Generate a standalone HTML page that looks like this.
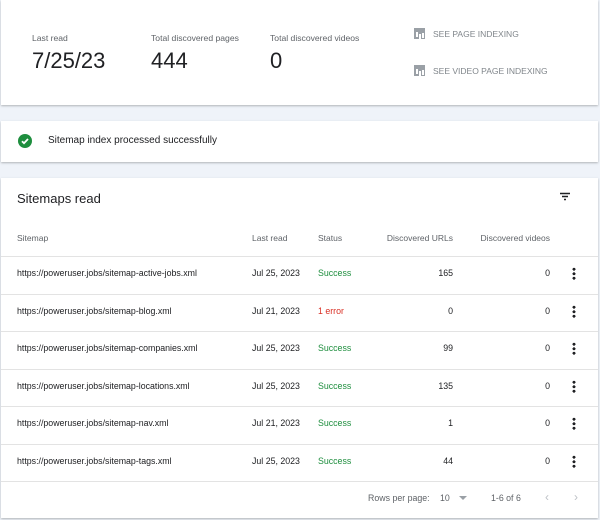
<!DOCTYPE html>
<html><head><style>
*{margin:0;padding:0;box-sizing:border-box}
body{width:600px;height:520px;background:#eff3f9;font-family:"Liberation Sans",sans-serif;color:#202124;position:relative;overflow:hidden}
.card{position:absolute;left:1px;width:597px;background:#fff;box-shadow:0 1px 2px rgba(60,64,67,.35)}
.lbl{position:absolute;font-size:8.6px;color:#5f6368}
.big{position:absolute;font-size:22px;color:#202124}
.lnk{position:absolute;font-size:8.5px;color:#80868b;display:flex;align-items:center}
.lnk i{display:inline-block;width:11px;height:11px;background:#9aa0a6;margin-right:8px;position:relative}
.lnk i:before{content:"";position:absolute;left:2px;bottom:2px;width:1.5px;height:5px;background:#fff;box-shadow:3px 2px 0 #fff,6px 1px 0 #fff}
.row{position:absolute;left:0;width:597px;height:37.5px;border-top:1px solid #e3e3e3;font-size:8.8px}
.row span{position:absolute;top:11px}
.ok{color:#1e8e3e}.err{color:#d93025}
.dots{position:absolute;left:571px;top:10px;width:4px;height:13px;background:radial-gradient(circle,#202124 1.4px,transparent 1.6px) 0 0/4px 4.5px repeat-y}
</style></head><body>
<div class="card" style="top:0;height:105px">
<div class="lbl" style="left:31px;top:33px">Last read</div>
<div class="lbl" style="left:150px;top:33px">Total discovered pages</div>
<div class="lbl" style="left:269px;top:33px">Total discovered videos</div>
<div class="big" style="left:31px;top:48px">7/25/23</div>
<div class="big" style="left:150px;top:48px">444</div>
<div class="big" style="left:269px;top:48px">0</div>
<div class="lnk" style="left:413px;top:28px"><i></i>SEE PAGE INDEXING</div>
<div class="lnk" style="left:413px;top:65px"><i></i>SEE VIDEO PAGE INDEXING</div>
</div>
<div class="card" style="top:121px;height:41px">
<div style="position:absolute;left:17px;top:13px;width:14px;height:14px;border-radius:50%;background:#1e8e3e"><svg width="14" height="14" viewBox="0 0 14 14"><path d="M4 7.2l2 2 4-4.2" stroke="#fff" stroke-width="1.8" fill="none"/></svg></div>
<div style="position:absolute;left:47px;top:14px;font-size:10px">Sitemap index processed successfully</div>
</div>
<div class="card" style="top:178px;height:340px">
<div style="position:absolute;left:16px;top:13px;font-size:13px">Sitemaps read</div>
<svg style="position:absolute;left:558px;top:14px" width="12" height="10" viewBox="0 0 12 10"><path d="M1 1.5h10M3 4.5h6M5 7.5h2" stroke="#202124" stroke-width="1.5"/></svg>
<div style="position:absolute;top:55px;left:0;width:597px;font-size:8.5px;color:#5f6368">
<span style="position:absolute;left:16px">Sitemap</span>
<span style="position:absolute;left:251px">Last read</span>
<span style="position:absolute;left:317px">Status</span>
<span style="position:absolute;right:145px">Discovered URLs</span>
<span style="position:absolute;right:48px">Discovered videos</span>
</div>
<div class="row" style="top:78px"><span style="left:16px">https://poweruser.jobs/sitemap-active-jobs.xml</span><span style="left:251px">Jul 25, 2023</span><span class="ok" style="left:317px">Success</span><span style="right:145px">165</span><span style="right:48px">0</span><div class="dots"></div></div>
<div class="row" style="top:115.5px"><span style="left:16px">https://poweruser.jobs/sitemap-blog.xml</span><span style="left:251px">Jul 21, 2023</span><span class="err" style="left:317px">1 error</span><span style="right:145px">0</span><span style="right:48px">0</span><div class="dots"></div></div>
<div class="row" style="top:153px"><span style="left:16px">https://poweruser.jobs/sitemap-companies.xml</span><span style="left:251px">Jul 25, 2023</span><span class="ok" style="left:317px">Success</span><span style="right:145px">99</span><span style="right:48px">0</span><div class="dots"></div></div>
<div class="row" style="top:190.5px"><span style="left:16px">https://poweruser.jobs/sitemap-locations.xml</span><span style="left:251px">Jul 25, 2023</span><span class="ok" style="left:317px">Success</span><span style="right:145px">135</span><span style="right:48px">0</span><div class="dots"></div></div>
<div class="row" style="top:228px"><span style="left:16px">https://poweruser.jobs/sitemap-nav.xml</span><span style="left:251px">Jul 21, 2023</span><span class="ok" style="left:317px">Success</span><span style="right:145px">1</span><span style="right:48px">0</span><div class="dots"></div></div>
<div class="row" style="top:265.5px"><span style="left:16px">https://poweruser.jobs/sitemap-tags.xml</span><span style="left:251px">Jul 25, 2023</span><span class="ok" style="left:317px">Success</span><span style="right:145px">44</span><span style="right:48px">0</span><div class="dots"></div></div>
<div class="row" style="top:303px;color:#5f6368"><span style="left:367px">Rows per page:</span><span style="left:439px">10</span><span style="left:458px;top:14px;width:0;height:0;border:4px solid transparent;border-top:4px solid #9aa0a6"></span><span style="left:490px">1-6 of 6</span><span style="left:544px;color:#bdc1c6;font-size:12px;top:8px">&lsaquo;</span><span style="left:573px;color:#bdc1c6;font-size:12px;top:8px">&rsaquo;</span></div>
</div>
</body></html>
